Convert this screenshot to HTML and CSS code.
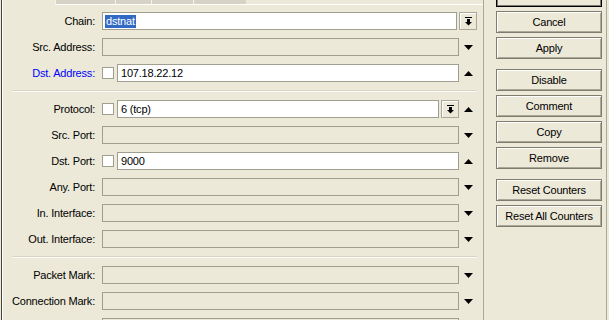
FILE: index.html
```html
<!DOCTYPE html>
<html>
<head>
  <title>NAT Rule</title>
  <meta charset="UTF-8">
  <link rel="stylesheet" href="styles.css">
</head>
<body>
  <div class="window">
    <div class="panel">
      <div class="tabstrip">
        <div class="tab tab-current"></div>
        <div class="tab tab-a"></div>
        <div class="tab tab-b"></div>
        <div class="tab tab-c"></div>
        <div class="tab tab-d"></div>
        <div class="tab-rest"></div>
      </div>

      <div class="form">
        <div class="row">
          <div class="label">Chain:</div>
          <div class="field"><span class="selected">dstnat</span></div>
          <div class="dropdown">
            <svg width="7" height="9" viewBox="0 0 7 9"><rect x="0" y="0" width="7" height="1" fill="#000"/><rect x="2" y="2" width="3" height="3" fill="#000"/><polygon points="0,5 7,5 3.5,8.5" fill="#000"/></svg>
          </div>
        </div>

        <div class="row">
          <div class="label">Src. Address:</div>
          <div class="field disabled"></div>
          <div class="arrow-cell"><svg width="9" height="5" viewBox="0 0 9 5"><polygon points="0,0 9,0 4.5,5" fill="#000"/></svg></div>
        </div>

        <div class="row">
          <div class="label active">Dst. Address:</div>
          <div class="check"></div>
          <div class="field">107.18.22.12</div>
          <div class="arrow-cell"><svg width="9" height="5" viewBox="0 0 9 5"><polygon points="0,5 9,5 4.5,0" fill="#000"/></svg></div>
        </div>

        <div class="separator"></div>

        <div class="row">
          <div class="label">Protocol:</div>
          <div class="check"></div>
          <div class="field">6 (tcp)</div>
          <div class="dropdown">
            <svg width="7" height="9" viewBox="0 0 7 9"><rect x="0" y="0" width="7" height="1" fill="#000"/><rect x="2" y="2" width="3" height="3" fill="#000"/><polygon points="0,5 7,5 3.5,8.5" fill="#000"/></svg>
          </div>
          <div class="arrow-cell"><svg width="9" height="5" viewBox="0 0 9 5"><polygon points="0,5 9,5 4.5,0" fill="#000"/></svg></div>
        </div>

        <div class="row">
          <div class="label">Src. Port:</div>
          <div class="field disabled"></div>
          <div class="arrow-cell"><svg width="9" height="5" viewBox="0 0 9 5"><polygon points="0,0 9,0 4.5,5" fill="#000"/></svg></div>
        </div>

        <div class="row">
          <div class="label">Dst. Port:</div>
          <div class="check"></div>
          <div class="field">9000</div>
          <div class="arrow-cell"><svg width="9" height="5" viewBox="0 0 9 5"><polygon points="0,5 9,5 4.5,0" fill="#000"/></svg></div>
        </div>

        <div class="row">
          <div class="label">Any. Port:</div>
          <div class="field disabled"></div>
          <div class="arrow-cell"><svg width="9" height="5" viewBox="0 0 9 5"><polygon points="0,0 9,0 4.5,5" fill="#000"/></svg></div>
        </div>

        <div class="row">
          <div class="label">In. Interface:</div>
          <div class="field disabled"></div>
          <div class="arrow-cell"><svg width="9" height="5" viewBox="0 0 9 5"><polygon points="0,0 9,0 4.5,5" fill="#000"/></svg></div>
        </div>

        <div class="row">
          <div class="label">Out. Interface:</div>
          <div class="field disabled"></div>
          <div class="arrow-cell"><svg width="9" height="5" viewBox="0 0 9 5"><polygon points="0,0 9,0 4.5,5" fill="#000"/></svg></div>
        </div>

        <div class="separator"></div>

        <div class="row">
          <div class="label">Packet Mark:</div>
          <div class="field disabled"></div>
          <div class="arrow-cell"><svg width="9" height="5" viewBox="0 0 9 5"><polygon points="0,0 9,0 4.5,5" fill="#000"/></svg></div>
        </div>

        <div class="row">
          <div class="label">Connection Mark:</div>
          <div class="field disabled"></div>
          <div class="arrow-cell"><svg width="9" height="5" viewBox="0 0 9 5"><polygon points="0,0 9,0 4.5,5" fill="#000"/></svg></div>
        </div>

        <div class="row">
          <div class="label"></div>
          <div class="field disabled"></div>
          <div class="arrow-cell"></div>
        </div>
      </div>
    </div>

    <div class="side">
      <div class="btn btn-default btn-ok">OK</div>
      <div class="btn">Cancel</div>
      <div class="btn">Apply</div>
      <div class="btn group-start">Disable</div>
      <div class="btn">Comment</div>
      <div class="btn">Copy</div>
      <div class="btn">Remove</div>
      <div class="btn group-start">Reset Counters</div>
      <div class="btn">Reset All Counters</div>
    </div>
  </div>
</body>
</html>
```

FILE: styles.css
```css
:root {
  --face: #ece9d8;
  --shadow: #aca899;
  --edge: #a09e8e;
  --dark-edge: #7f7d70;
  --highlight: #316ac5;
}

body {
  margin: 0;
  background-color: var(--face);
  font-family: "Liberation Sans", Tahoma, Arial, sans-serif;
  font-size: 11px;
  letter-spacing: -0.2px;
  color: #000;
  overflow: hidden;
}

.window {
  display: flex;
  height: 320px;
  margin-left: 1px;
  border-left: 1px solid #45443d;
  overflow: hidden;
}

.panel {
  width: 482px;
  flex-shrink: 0;
  border-left: 1px solid #fff;
  border-right: 1px solid var(--shadow);
  box-sizing: border-box;
  margin-right: 1px;
}

/* cut off tab headers */
.tabstrip {
  display: flex;
  height: 5px;
}

.tab {
  height: 4px;
  border-bottom: 1px solid #fff;
  background-color: #d6d3c6;
  border-left: 1px solid #f4f3ec;
  box-sizing: content-box;
}

.tab-current {
  width: 52px;
  background-color: var(--face);
  border-left: none;
  border-bottom-color: var(--face);
}

.tab-a { width: 59px; }
.tab-b { width: 35px; }
.tab-c { width: 41px; }
.tab-d { width: 52px; }

.tab-rest {
  flex: 1;
  height: 4px;
  border-bottom: 1px solid #fff;
}

.form {
  display: flex;
  flex-direction: column;
  gap: 8px;
  padding: 7px 6px 0 0;
}

.row {
  display: flex;
  align-items: center;
  height: 18px;
}

.label {
  width: 92px;
  margin-right: 7px;
  text-align: right;
  white-space: nowrap;
}

.label.active {
  color: #0000ff;
}

.check {
  width: 12px;
  height: 12px;
  margin-right: 3px;
  background-color: #fff;
  border: 1px solid var(--edge);
  box-sizing: border-box;
}

.field {
  flex: 1;
  height: 18px;
  line-height: 16px;
  padding-left: 3px;
  background-color: #fff;
  border: 1px solid var(--edge);
  box-sizing: border-box;
  white-space: nowrap;
}

.field.disabled {
  background-color: var(--face);
}

.selected {
  display: inline-block;
  margin-left: -1px;
  padding: 0 1px;
  line-height: 13px;
  background-color: var(--highlight);
  color: #fff;
}

.dropdown {
  width: 18px;
  height: 18px;
  margin-left: 2px;
  display: flex;
  align-items: center;
  justify-content: center;
  background-color: var(--face);
  border: 1px solid var(--shadow);
  box-shadow: inset 1px 1px 0 #fff;
  box-sizing: border-box;
}

.arrow-cell {
  width: 18px;
  display: flex;
  justify-content: center;
  align-items: center;
}

.arrow-cell svg,
.dropdown svg {
  display: block;
}

.separator {
  height: 0;
  margin: 0 0 0 9px;
  border-top: 1px solid #d8d5c6;
  border-bottom: 1px solid #fbfaf5;
}

.side {
  width: 122px;
  flex-shrink: 0;
  display: flex;
  flex-direction: column;
  gap: 4px;
  padding-left: 11px;
  box-sizing: border-box;
  border-right: 1px solid var(--shadow);
}

.btn {
  width: 106px;
  height: 22px;
  line-height: 20px;
  text-align: center;
  border: 1px solid var(--dark-edge);
  box-shadow: inset 1px 1px 0 #fff, inset -1px -1px 0 var(--shadow);
  box-sizing: border-box;
  flex-shrink: 0;
}

.btn-default {
  border-color: #000;
  box-shadow: inset 0 0 0 1px var(--dark-edge);
}

.btn-ok {
  margin-top: -15px;
}

.group-start {
  margin-top: 6px;
}
```
